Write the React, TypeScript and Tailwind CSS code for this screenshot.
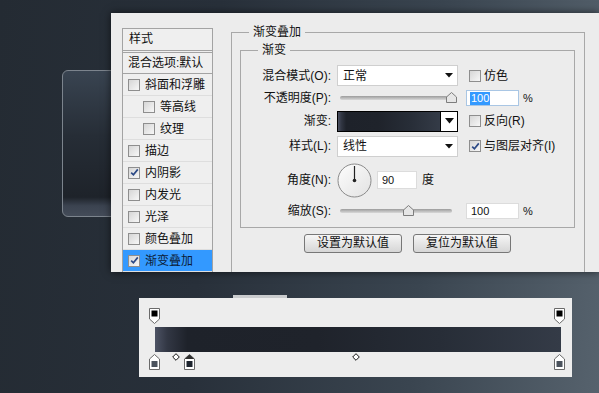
import React from "react";

const FONT = { fontFamily: '"Liberation Sans", "Noto Sans CJK SC", sans-serif' };

const BAR =
  "bg-[linear-gradient(90deg,#4d5364_0%,#323744_3%,#1e222a_8%,#1f232b_40%,#272d37_70%,#343b47_100%)]";

function Box({ checked }: { checked?: boolean }) {
  return (
    <span className="flex h-[12px] w-[12px] shrink-0 items-center justify-center border border-[#8e8e8e] bg-gradient-to-br from-[#d6d6d6] to-[#f7f7f7]">
      {checked && (
        <svg width="9" height="9" viewBox="0 0 9 9">
          <path d="M1.2 4.6 L3.4 6.8 L7.8 1.4" fill="none" stroke="#2c4a86" strokeWidth="1.7" />
        </svg>
      )}
    </span>
  );
}

function Arrow() {
  return (
    <svg width="8" height="5" viewBox="0 0 8 5">
      <path d="M0 0 H8 L4 4.5 Z" fill="#111" />
    </svg>
  );
}

function Slider({ thumb }: { thumb: string }) {
  return (
    <div className="relative h-[14px] w-[121px]">
      <div className="absolute left-[3px] top-[5px] h-[4px] w-[112px] rounded-full bg-gradient-to-b from-[#9c9c9c] to-[#d9d9d9]" />
      <svg className={`absolute top-[1px] ${thumb}`} width="11" height="11" viewBox="0 0 11 11">
        <path d="M0.5 10.5 V5 L5.5 0.5 L10.5 5 V10.5 Z" fill="#e6e6e6" stroke="#7d7d7d" />
      </svg>
    </div>
  );
}

const LIST: { label: string; indent?: boolean; checked?: boolean; active?: boolean }[] = [
  { label: "斜面和浮雕" },
  { label: "等高线", indent: true },
  { label: "纹理", indent: true },
  { label: "描边" },
  { label: "内阴影", checked: true },
  { label: "内发光" },
  { label: "光泽" },
  { label: "颜色叠加" },
  { label: "渐变叠加", checked: true, active: true },
];

function StyleList() {
  return (
    <div className="ml-[11px] mt-[15px] flex h-[244px] w-[91px] shrink-0 flex-col border-x border-t border-[#a3a3a3] bg-[#efefef] text-[12px] text-[#111]">
      <div className="h-[22px] border-b border-[#a3a3a3] pl-[6px] leading-[21px]">样式</div>
      <div className="mt-[1px] h-[22px] border-y border-[#a3a3a3] pl-[5px] leading-[20px]">混合选项:默认</div>
      {LIST.map((item) => (
        <div
          key={item.label}
          className={
            "flex h-[22px] items-center gap-[5px] border-b border-[#dedede] " +
            (item.indent ? "pl-[20px] " : "pl-[5px] ") +
            (item.active ? "bg-[#3399ff] text-[#0c1c38]" : "")
          }
        >
          <Box checked={item.checked} />
          <span>{item.label}</span>
        </div>
      ))}
    </div>
  );
}

function Row({ label, className, children }: { label: string; className?: string; children: React.ReactNode }) {
  return (
    <div className={`flex items-center ${className ?? ""}`}>
      <span className="w-[90px] shrink-0 text-right">{label}</span>
      {children}
    </div>
  );
}

function Select({ value }: { value: string }) {
  return (
    <div className="ml-[6px] flex h-[21px] w-[121px] items-center justify-between border border-[#cfcfcf] bg-white pl-[5px] pr-[4px]">
      <span>{value}</span>
      <Arrow />
    </div>
  );
}

function Check({ label, checked }: { label: string; checked?: boolean }) {
  return (
    <div className="ml-[11px] flex items-center gap-[3px]">
      <Box checked={checked} />
      <span>{label}</span>
    </div>
  );
}

function GradientPanel() {
  return (
    <fieldset className="ml-[18px] mt-[11px] h-[300px] w-[354px] shrink-0 border border-[#a8a8a8]">
      <legend className="ml-[17px] px-[4px] text-[12px] leading-[16px]">渐变叠加</legend>
      <fieldset className="ml-[8px] mt-[2px] w-[335px] border border-[#a8a8a8] pb-[8px] pt-[7px]">
        <legend className="ml-[17px] px-[4px] leading-[16px]">渐变</legend>

        <Row label="混合模式(O):" className="h-[21px]">
          <Select value="正常" />
          <Check label="仿色" />
        </Row>

        <Row label="不透明度(P):" className="mt-[2px] h-[20px]">
          <div className="ml-[6px]">
            <Slider thumb="left-[109px]" />
          </div>
          <div className="ml-[8px] flex h-[16px] w-[53px] items-center border border-[#a9c6e4] bg-white pl-[3px] text-[11px]">
            <span className="bg-[#3399ff] px-[1px] leading-[13px] text-white">100</span>
          </div>
          <span className="ml-[4px] text-[11px]">%</span>
        </Row>

        <Row label="渐变:" className="mt-[3px] h-[20px]">
          <div className={`ml-[6px] h-[21px] w-[104px] border border-black ${BAR}`} />
          <div className="flex h-[21px] w-[17px] items-center justify-center border border-l-0 border-black bg-white">
            <svg width="9" height="6" viewBox="0 0 9 6">
              <path d="M0 0 H9 L4.5 5.5 Z" fill="#111" />
            </svg>
          </div>
          <Check label="反向(R)" />
        </Row>

        <Row label="样式(L):" className="mt-[5px] h-[20px]">
          <Select value="线性" />
          <Check label="与图层对齐(I)" checked />
        </Row>

        <Row label="角度(N):" className="mt-[6px] h-[36px]">
          <svg className="ml-[6px]" width="35" height="35" viewBox="0 0 35 35">
            <defs>
              <linearGradient id="dial" x1="0" y1="0" x2="1" y2="1">
                <stop offset="0" stopColor="#fdfdfd" />
                <stop offset="1" stopColor="#e2e2e2" />
              </linearGradient>
            </defs>
            <circle cx="17.5" cy="17.5" r="16.5" fill="url(#dial)" stroke="#8a8a8a" />
            <line x1="17.5" y1="17.5" x2="17.5" y2="3" stroke="#222" strokeWidth="1.2" />
            <circle cx="17.5" cy="17.5" r="1.8" fill="#222" />
          </svg>
          <div className="ml-[5px] flex h-[18px] w-[40px] items-center border border-[#dcdcdc] bg-white pl-[4px] text-[11px]">
            90
          </div>
          <span className="ml-[5px]">度</span>
        </Row>

        <Row label="缩放(S):" className="mt-[5px] h-[16px]">
          <div className="ml-[6px]">
            <Slider thumb="left-[66px]" />
          </div>
          <div className="ml-[8px] flex h-[16px] w-[53px] items-center border border-[#dcdcdc] bg-white pl-[4px] text-[11px]">
            100
          </div>
          <span className="ml-[4px] text-[11px]">%</span>
        </Row>
      </fieldset>

      <div className="ml-[8px] mt-[6px] flex w-[335px] justify-center gap-[11px]">
        <button className="h-[19px] w-[98px] rounded-[3px] border border-[#777] bg-gradient-to-b from-[#f6f6f6] to-[#d6d6d6] text-[12px] leading-[17px]">
          设置为默认值
        </button>
        <button className="h-[19px] w-[98px] rounded-[3px] border border-[#777] bg-gradient-to-b from-[#f6f6f6] to-[#d6d6d6] text-[12px] leading-[17px]">
          复位为默认值
        </button>
      </div>
    </fieldset>
  );
}

function OpacityStop({ className }: { className: string }) {
  return (
    <svg className={`absolute top-[10px] ${className}`} width="11" height="16" viewBox="0 0 11 16">
      <path d="M0.5 0.5 H10.5 V11 L5.5 15.5 L0.5 11 Z" fill="#fff" stroke="#6a6a6a" />
      <rect x="2.5" y="2.5" width="6" height="6" fill="#000" />
    </svg>
  );
}

function ColorStop({ className, selected }: { className: string; selected?: boolean }) {
  return (
    <svg className={`absolute top-[56px] ${className}`} width="11" height="16" viewBox="0 0 11 16">
      <path d="M5.5 0.5 L10.5 5 V15.5 H0.5 V5 Z" fill="#fff" stroke="#6a6a6a" />
      {selected && <path d="M5.5 0.5 L10.5 5 H0.5 Z" fill="#2e2e2e" />}
      <rect x="2.5" y="7" width="6" height="6" fill={selected ? "#1c232d" : "#4a525c"} />
    </svg>
  );
}

function Diamond({ className }: { className: string }) {
  return (
    <svg className={`absolute top-[55px] ${className}`} width="8" height="8" viewBox="0 0 8 8">
      <path d="M4 0.7 L7.3 4 L4 7.3 L0.7 4 Z" fill="#fff" stroke="#111" />
    </svg>
  );
}

function GradientEditor() {
  return (
    <div className="absolute left-[139px] top-[298px] h-[79px] w-[433px] bg-[#ededed]">
      <div className="absolute left-[94px] top-[-3px] h-[3px] w-[54px] bg-[#c9cbcd]" />
      <div className={`ml-[16px] mt-[29px] h-[25px] w-[406px] ${BAR}`} />
      <OpacityStop className="left-[10px]" />
      <OpacityStop className="left-[415px]" />
      <ColorStop className="left-[10px]" />
      <ColorStop className="left-[45px]" selected />
      <ColorStop className="left-[415px]" />
      <Diamond className="left-[33px]" />
      <Diamond className="left-[213px]" />
    </div>
  );
}

export default function App() {
  return (
    <div
      style={FONT}
      className="relative h-[393px] w-[599px] overflow-hidden bg-[linear-gradient(95deg,#242b33_0%,#28303a_35%,#3a4550_70%,#56626d_100%)] text-[12px] text-[#111]"
    >
      <div className="absolute left-[62px] top-[70px] h-[147px] w-[80px] rounded-[6px] border border-[#7c848d] bg-[linear-gradient(180deg,#394451_0%,#262d36_45%,#1e232a_87%,#3b4350_93%,#444c59_100%)]" />

      <div className="absolute left-[111px] top-[13px] flex h-[259px] w-[488px] items-start overflow-hidden bg-[#ececec] shadow-[0_0_8px_rgba(0,0,0,0.6)]">
        <StyleList />
        <GradientPanel />
      </div>

      <GradientEditor />
    </div>
  );
}
